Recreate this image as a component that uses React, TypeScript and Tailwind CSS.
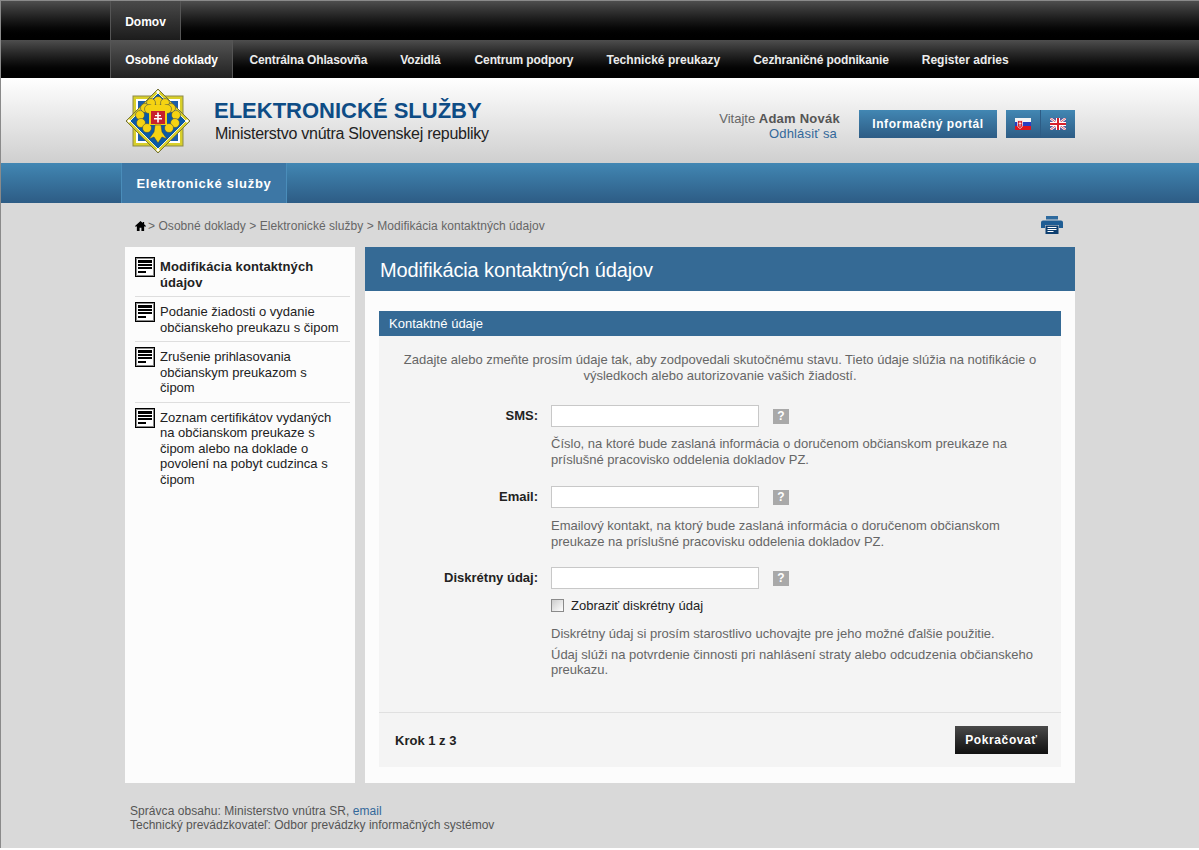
import React from "react";

const topMenu = [
  { label: "Osobné doklady", active: true, cls: "" },
  { label: "Centrálna Ohlasovňa", cls: "tracking-[-0.12px]" },
  { label: "Vozidlá", cls: "tracking-[-0.12px]" },
  { label: "Centrum podpory", cls: "ml-px tracking-[-0.12px]" },
  { label: "Technické preukazy", cls: "tracking-[0.04px]" },
  { label: "Cezhraničné podnikanie", cls: "tracking-[-0.12px]" },
  { label: "Register adries", cls: "tracking-[0.02px]" },
];

const sideItems = [
  { lines: ["Modifikácia kontaktných", "údajov"], active: true },
  { lines: ["Podanie žiadosti o vydanie", "občianskeho preukazu s čipom"] },
  { lines: ["Zrušenie prihlasovania", "občianskym preukazom s", "čipom"] },
  {
    lines: [
      "Zoznam certifikátov vydaných",
      "na občianskom preukaze s",
      "čipom alebo na doklade o",
      "povolení na pobyt cudzinca s",
      "čipom",
    ],
  },
];

// leaves of the tree in the emblem
const leaves = [
  [33, 13],
  [26, 15],
  [40, 15],
  [20, 20],
  [46, 20],
  [15, 27],
  [51, 27],
  [16, 35],
  [50, 35],
  [22, 40],
  [44, 40],
  [24, 21],
  [42, 21],
];

function Logo() {
  return (
    <svg width="66" height="66" viewBox="0 0 66 66" className="shrink-0">
      <rect x="8" y="8" width="50" height="50" fill="#d8cf2a" stroke="#8d8a4a" />
      <rect x="11" y="11" width="44" height="44" fill="#fff" />
      <rect x="13" y="13" width="40" height="40" fill="#1c5ea8" />
      <path d="M33 1 L65 33 L33 65 L1 33 Z" fill="#d8cf2a" stroke="#77733a" />
      <path d="M33 5 L61 33 L33 61 L5 33 Z" fill="#0b5aa5" stroke="#f4f1d8" />
      <path d="M33 2l2 2-2 2-2-2zM33 60l2 2-2 2-2-2zM2 33l2-2 2 2-2 2zM60 33l2-2 2 2-2 2z" fill="#fff" />
      {leaves.map(([x, y]) => (
        <circle key={`${x}-${y}`} cx={x} cy={y} r="4.500" fill="#f5d312" stroke="#2a3a55" strokeWidth="0.5" />
      ))}
      <rect x="24" y="17" width="18" height="20" fill="#f5d312" />
      <path d="M30 37h6l1 7 5 7-5-2-4 6-4-6-5 2 5-7z" fill="#f5d312" stroke="#2a3a55" strokeWidth="0.5" />
      <rect x="26" y="23" width="14" height="13" fill="#c8202c" />
      <path d="M32.200 24.500h1.600v10h-1.600zM30 27h6v1.300h-6zM29 30h8v1.400h-8z" fill="#fff" />
    </svg>
  );
}

function DocIcon() {
  return (
    <span className="flex h-5 w-5 shrink-0 flex-col border border-black bg-white px-[2px] pt-[2px] shadow-[inset_0_0_0_1px_#888]">
      <span className="h-[3px] bg-black" />
      <span className="mt-px h-[2px] bg-black" />
      <span className="mt-px h-[2px] bg-black" />
      <span className="mt-[2px] h-[2px] w-2 bg-black" />
    </span>
  );
}

function SkFlag() {
  return (
    <svg width="16" height="12" viewBox="0 0 16 12">
      <rect width="16" height="4" fill="#f4f4f4" />
      <rect y="4" width="16" height="4" fill="#2a3cc0" />
      <rect y="8" width="16" height="4" fill="#e0141c" />
      <path d="M2.500 2.500h5v5c0 1.500-1.500 2.500-2.500 3-1-.5-2.500-1.500-2.500-3z" fill="#d8202c" stroke="#fff" strokeWidth="0.7" />
      <path d="M4.600 3.500h.8v5h-.8zM3.700 5h2.600v.7H3.700z" fill="#fff" />
    </svg>
  );
}

function UkFlag() {
  return (
    <svg width="16" height="12" viewBox="0 0 16 12">
      <rect width="16" height="12" fill="#5a5a9a" />
      <path d="M0 0L16 12M16 0L0 12" stroke="#fff" strokeWidth="2.400" />
      <path d="M0 0L16 12M16 0L0 12" stroke="#d03040" strokeWidth="0.8" />
      <path d="M8 0v12M0 6h16" stroke="#fff" strokeWidth="4" />
      <path d="M8 0v12M0 6h16" stroke="#d8202c" strokeWidth="2" />
    </svg>
  );
}

function HomeIcon() {
  return (
    <svg width="11" height="10" viewBox="0 0 12 11">
      <path d="M6 0L0 5.500 1 6.500 2 5.600V11H5V7.500H7V11H10V5.600L11 6.500 12 5.500 10 3.700V1H8.500V2.300z" fill="#000" />
    </svg>
  );
}

function PrintIcon() {
  return (
    <svg width="22" height="18" viewBox="0 0 22 18">
      <path d="M5 0H17V3.500H5z" fill="#2e6a9e" />
      <path d="M2 4.500H20A2 2 0 0 1 22 6.500V12H18V9H4V12H0V6.500A2 2 0 0 1 2 4.500z" fill="#1f5d94" />
      <rect x="4.500" y="9.500" width="13" height="8.500" fill="#0e3f70" />
      <path d="M6.500 11.500H15.500M6.500 13.500H15.500M6.500 15.500H12.500" stroke="#fff" strokeWidth="1" />
    </svg>
  );
}

function HelpBox() {
  return (
    <span className="flex h-[15px] w-4 items-center justify-center bg-[#a9a9a9] text-[12px] font-bold leading-none text-white">
      ?
    </span>
  );
}

function Field(props: { label: string; mb: string; children: React.ReactNode }) {
  return (
    <div className={`flex ${props.mb}`}>
      <label className="w-[159px] shrink-0 pt-[2px] text-right text-[13px] leading-[18px] font-bold text-[#222]">
        {props.label}
      </label>
      <div className="ml-[13px] flex-1">
        <div className="flex items-center">
          <input type="text" className="h-[22px] w-[208px] border border-[#c8c8c8] bg-white" />
          <span className="ml-[14px]">
            <HelpBox />
          </span>
        </div>
        {props.children}
      </div>
    </div>
  );
}

export default function App() {
  return (
    <div className="flex h-[848px] w-[1199px] flex-col overflow-hidden border-t border-l border-[#8a8a8a] bg-[#d9d9d9] font-['Liberation_Sans',Arial,sans-serif]">
      <div className="h-[39px] bg-gradient-to-b from-[#4e4e4e] to-black pl-[109px]">
        <a className="flex h-[39px] w-[71px] items-center justify-center border-x border-[#555] bg-gradient-to-b from-[#4a4a4a] to-[#1c1c1c] pt-[2px] text-[12px] font-bold text-white">
          Domov
        </a>
      </div>
      <div className="flex h-[38px] bg-gradient-to-b from-[#4e4e4e] to-black pl-[109px]">
        {topMenu.map((m) =>
          m.active ? (
            <a
              key={m.label}
              className="flex h-[38px] w-[123px] items-center justify-center border-x border-[#555] bg-gradient-to-b from-[#555] to-[#222] pt-px text-[12px] font-bold tracking-[-0.05px] text-white"
            >
              {m.label}
            </a>
          ) : (
            <a
              key={m.label}
              className={`flex h-[38px] items-center px-[16.500px] pt-px text-[12px] font-bold text-[#ececec] ${m.cls}`}
            >
              {m.label}
            </a>
          ),
        )}
      </div>

      <div className="flex h-[85px] items-start bg-gradient-to-b from-white to-[#cfcfcf] pl-[124px]">
        <div className="mt-[10px]">
          <Logo />
        </div>
        <div className="ml-[23px] mt-[20px]">
          <div className="text-[22px] leading-[26px] font-bold text-[#0e4c85]">ELEKTRONICKÉ SLUŽBY</div>
          <div className="ml-px text-[16px] leading-[20px] tracking-[-0.27px] text-[#222]">
            Ministerstvo vnútra Slovenskej republiky
          </div>
        </div>
        <div className="ml-auto mr-[124px] mt-[32px] flex items-start">
          <div className="mr-[18px] pt-px text-right text-[13px] leading-[15px] text-[#666]">
            <div className="pr-px">
              Vitajte <b className="tracking-[0.25px] text-[#555]">Adam Novák</b>
            </div>
            <div className="pr-[4px] tracking-[0.15px] text-[#33689a]">Odhlásiť sa</div>
          </div>
          <a className="flex h-[28px] w-[138px] items-center justify-center bg-gradient-to-b from-[#4287b3] to-[#2d5c85] text-[12px] font-bold tracking-[0.6px] text-white">
            Informačný portál
          </a>
          <div className="ml-[9px] flex h-[28px] w-[69px] bg-gradient-to-b from-[#4287b3] to-[#2d5c85]">
            <span className="flex w-[35px] items-center justify-center border-r border-[#2d5c85]">
              <SkFlag />
            </span>
            <span className="flex flex-1 items-center justify-center">
              <UkFlag />
            </span>
          </div>
        </div>
      </div>

      <div className="h-[40px] bg-gradient-to-b from-[#4287b3] to-[#2d5c85] pl-[120px]">
        <a className="flex h-[40px] w-[166px] items-center justify-center border-x border-[#4a8dba] bg-[#3d77a5] pt-px text-[13px] font-bold tracking-[0.72px] text-white">
          Elektronické služby
        </a>
      </div>

      <div className="flex h-[44px] items-center justify-between pl-[134px] pr-[136px]">
        <div className="flex items-center pt-[2px] text-[12px] tracking-[0.05px] text-[#666]">
          <HomeIcon />
          <span className="ml-[2px]">&gt; Osobné doklady &gt; Elektronické služby &gt; Modifikácia kontaktných údajov</span>
        </div>
        <PrintIcon />
      </div>

      <div className="ml-[124px] flex w-[950px] gap-[10px]">
        <aside className="h-[536px] w-[230px] shrink-0 bg-[#fcfcfc] pt-[5px] pl-[10px] pr-[5px]">
          {sideItems.map((s, i) => (
            <div
              key={i}
              className={`flex gap-[5px] pt-[5px] pb-[6px] text-[13px] leading-[15.500px] text-[#222] ${
                i < sideItems.length - 1 ? "border-b border-[#dedede]" : ""
              } ${s.active ? "font-bold tracking-[0.1px]" : ""}`}
            >
              <DocIcon />
              <div className="pt-[2px]">
                {s.lines.map((l) => (
                  <div key={l}>{l}</div>
                ))}
              </div>
            </div>
          ))}
        </aside>

        <main className="h-[536px] w-[710px] bg-[#fcfcfc]">
          <h1 className="flex h-[44px] items-center bg-[#356a95] pl-[15px] pt-[2px] text-[20px] font-normal tracking-[-0.13px] text-white">
            Modifikácia kontaktných údajov
          </h1>
          <section className="mx-[14px] mt-[20px] h-[456px] bg-[#f4f4f4]">
            <div className="flex h-[25px] items-center bg-[#356a95] pl-[10px] text-[13px] text-white">Kontaktné údaje</div>
            <p className="px-[8px] pt-[16px] text-center text-[13px] leading-[15.500px] text-[#666]">
              Zadajte alebo zmeňte prosím údaje tak, aby zodpovedali skutočnému stavu. Tieto údaje slúžia na notifikácie o
              <br />
              výsledkoch alebo autorizovanie vašich žiadostí.
            </p>
            <div className="mt-[22px] h-[308px] border-b border-[#e0e0e0]">
              <Field label="SMS:" mb="mb-[19px]">
                <p className="mt-[9px] text-[13px] leading-[15.500px] text-[#666]">
                  Číslo, na ktoré bude zaslaná informácia o doručenom občianskom preukaze na
                  <br />
                  príslušné pracovisko oddelenia dokladov PZ.
                </p>
              </Field>
              <Field label="Email:" mb="mb-[18px]">
                <p className="mt-[10px] text-[13px] leading-[15.500px] text-[#666]">
                  Emailový kontakt, na ktorý bude zaslaná informácia o doručenom občianskom
                  <br />
                  preukaze na príslušné pracovisku oddelenia dokladov PZ.
                </p>
              </Field>
              <Field label="Diskrétny údaj:" mb="">
                <label className="mt-[9px] flex items-center text-[13px] leading-[15px] text-[#222]">
                  <span className="h-[13px] w-[13px] border border-[#8a8a8a] bg-gradient-to-br from-[#ccc] to-white" />
                  <span className="ml-[7px]">Zobraziť diskrétny údaj</span>
                </label>
                <p className="mt-[13px] text-[13px] leading-[15.500px] text-[#666]">
                  Diskrétny údaj si prosím starostlivo uchovajte pre jeho možné ďalšie použitie.
                </p>
                <p className="mt-[5px] text-[13px] leading-[15.500px] text-[#666]">
                  Údaj slúži na potvrdenie činnosti pri nahlásení straty alebo odcudzenia občianskeho
                  <br />
                  preukazu.
                </p>
              </Field>
            </div>
            <div className="flex items-center justify-between pl-[16px] pr-[13px] pt-[13px]">
              <span className="pt-px text-[13px] font-bold text-[#222]">Krok 1 z 3</span>
              <a className="flex h-[28px] w-[93px] items-center justify-center bg-gradient-to-b from-[#4a4a4a] to-[#111] text-[12px] font-bold tracking-[0.6px] text-white">
                Pokračovať
              </a>
            </div>
          </section>
        </main>
      </div>

      <footer className="ml-[129px] mt-[22px] text-[12px] leading-[13.500px] text-[#555]">
        <div className="tracking-[0.05px]">
          Správca obsahu: Ministerstvo vnútra SR, <a className="text-[#33689a]">email</a>
        </div>
        <div>Technický prevádzkovateľ: Odbor prevádzky informačných systémov</div>
      </footer>
    </div>
  );
}
